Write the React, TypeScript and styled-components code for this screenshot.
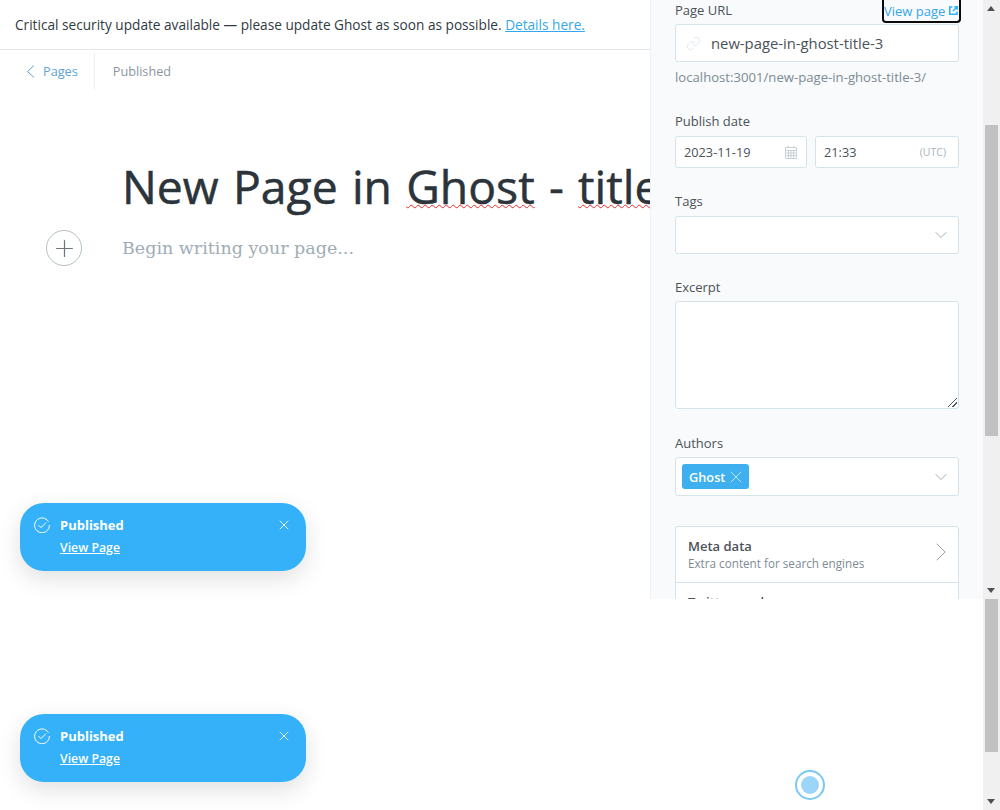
import styled, { createGlobalStyle } from 'styled-components'
import { ChevronDown, ChevronRight, Link, Plus, X } from 'lucide-react'

const BODY_FONT = '"Open Sans", "Noto Sans", sans-serif'

const CheckCircle = () => (
  <svg width='16' height='16' viewBox='0 0 16 16' fill='none' stroke='#fff' strokeWidth='1'>
    <path d='M14.4 4.6A7.4 7.4 0 1 0 15.4 8' />
    <path d='M4.6 8.2l2.4 2.4 5-5' />
  </svg>
)

const CalendarIcon = () => (
  <svg width='12' height='14' viewBox='0 0 12 14' fill='none' stroke='#c9d2d8' strokeWidth='1'>
    <path d='M.5 2.5h11v11H.5zM3 .5v2M9 .5v2' />
    <path d='M.5 5.5h11M.5 8h11M.5 10.5h11M3.5 5.5v8M6 5.5v8M8.5 5.5v8' />
  </svg>
)

const ExternalIcon = () => (
  <svg width='9' height='9' viewBox='0 0 9 9' fill='none' stroke='#35b1f9' strokeWidth='1.6'>
    <path d='M3.5 1H.8v7.2H8V5.5M4 5l4-4M5.2.8h3v3' />
  </svg>
)

const BackChevron = () => (
  <svg width='9' height='13' viewBox='0 0 9 13' fill='none' stroke='#5ba4d6' strokeWidth='1'>
    <path d='M8 .5 1.5 6.5 8 12.5' />
  </svg>
)

const Toast = () => (
  <ToastCard>
    <CheckCircle />
    <ToastBody>
      <ToastTitle>Published</ToastTitle>
      <ToastLink href='#'>View Page</ToastLink>
    </ToastBody>
    <ToastClose>
      <X size={16} strokeWidth={1.3} />
    </ToastClose>
  </ToastCard>
)

const App = () => {
  return (
    <Page>
      <GlobalStyle />
      <Frame>
        <EditorPane>
          <Alert>
            Critical security update available — please update Ghost as soon as possible.{' '}
            <AlertLink href='#'>Details here.</AlertLink>
          </Alert>
          <EditorBar>
            <BackLink>
              <BackChevron />
              Pages
            </BackLink>
            <Status>Published</Status>
          </EditorBar>
          <Editor>
            <Title>
              New Page in <Misspelt>Ghost</Misspelt> - <Misspelt>title</Misspelt>
            </Title>
            <BodyRow>
              <PlusButton>
                <Plus size={27} strokeWidth={1.1} />
              </PlusButton>
              <Placeholder>Begin writing your page...</Placeholder>
            </BodyRow>
          </Editor>
        </EditorPane>
        <Sidebar>
          <LabelRow>
            <UrlLabel>Page URL</UrlLabel>
            <ViewLink href='#'>
              View page <ExternalIcon />
            </ViewLink>
          </LabelRow>
          <UrlField>
            <Link size={15} strokeWidth={1.2} color='#d5e2ea' />
            new-page-in-ghost-title-3
          </UrlField>
          <Hint>localhost:3001/new-page-in-ghost-title-3/</Hint>

          <DateLabel>Publish date</DateLabel>
          <DateRow>
            <SmallField>
              2023-11-19
              <CalendarIcon />
            </SmallField>
            <SmallField>
              21:33
              <Utc>(UTC)</Utc>
            </SmallField>
          </DateRow>

          <TagsLabel>Tags</TagsLabel>
          <SelectField $height={38}>
            <span />
            <ChevronDown size={20} strokeWidth={1} color='#8e9ba3' />
          </SelectField>

          <ExcerptLabel>Excerpt</ExcerptLabel>
          <Excerpt />

          <AuthorsLabel>Authors</AuthorsLabel>
          <SelectField $height={39}>
            <AuthorTag>
              Ghost
              <X size={20} strokeWidth={0.8} />
            </AuthorTag>
            <ChevronDown size={20} strokeWidth={1} color='#8e9ba3' />
          </SelectField>

          <SettingsList>
            <SettingsItem>
              <div>
                <SettingsTitle>Meta data</SettingsTitle>
                <SettingsText>Extra content for search engines</SettingsText>
              </div>
              <SettingsChevron size={32} strokeWidth={0.7} color='#8e9ba3' />
            </SettingsItem>
            <SettingsItem>
              <SettingsTitle>Twitter card</SettingsTitle>
            </SettingsItem>
          </SettingsList>
        </Sidebar>
        <Scrollbar>
          <ArrowUp />
          <Thumb $top={125} $height={311} />
          <ArrowDown />
        </Scrollbar>
        <ToastSlot>
          <Toast />
        </ToastSlot>
      </Frame>
      <Below>
        <Spinner>
          <SpinnerDot />
        </Spinner>
      </Below>
      <OuterScrollbar>
        <Thumb $top={0} $height={153} />
        <ArrowDown />
      </OuterScrollbar>
      <ToastSlot>
        <Toast />
      </ToastSlot>
    </Page>
  )
}

export default App

const GlobalStyle = createGlobalStyle`
  html, body {
    margin: 0;
    padding: 0;
    background: #fff;
    overflow: hidden;
  }
  * {
    box-sizing: border-box;
  }
`

const Page = styled.div`
  position: relative;
  width: 1000px;
  height: 810px;
  overflow: hidden;
  font-family: ${BODY_FONT};
  color: #394047;
  background: #fff;
`

const Frame = styled.div`
  position: relative;
  display: flex;
  width: 1000px;
  height: 599px;
  overflow: hidden;
`

const EditorPane = styled.div`
  width: 650px;
  flex: none;
  overflow: hidden;
  background: #fff;
`

const Alert = styled.div`
  height: 50px;
  padding: 15px 15px 0;
  border-bottom: 1px solid #e3e6e8;
  font-size: 13.65px;
  line-height: 19px;
  color: #2f3a41;
  white-space: nowrap;
`

const AlertLink = styled.a`
  color: #35a7ee;
  text-decoration: underline;
`

const EditorBar = styled.div`
  display: flex;
  align-items: center;
  height: 39px;
  padding: 3px 0 0 26px;
  font-size: 12.7px;
`

const BackLink = styled.div`
  display: flex;
  align-items: center;
  gap: 8px;
  height: 100%;
  padding-right: 16px;
  border-right: 1px solid #e8eef2;
  color: #5ba4d6;
`

const Status = styled.div`
  padding-left: 18px;
  color: #8b979e;
`

const Editor = styled.div`
  padding: 69px 0 0 122px;
`

const Title = styled.div`
  font-size: 46.3px;
  line-height: 58px;
  font-weight: 500;
  word-spacing: 2.2px;
  -webkit-text-stroke: 0.5px #2b343b;
  color: #2b343b;
  white-space: nowrap;
`

const Misspelt = styled.span`
  text-decoration: underline wavy #ee2a2a 1px;
  text-underline-offset: 0;
  text-decoration-skip-ink: none;
`

const BodyRow = styled.div`
  display: flex;
  align-items: center;
  margin: 14px 0 0 -76px;
`

const PlusButton = styled.div`
  display: flex;
  align-items: center;
  justify-content: center;
  flex: none;
  width: 36px;
  height: 36px;
  margin-right: 40px;
  border: 1px solid #b3c0c7;
  border-radius: 50%;
  color: #6b767d;
`

const Placeholder = styled.div`
  font-family: 'DejaVu Serif', serif;
  font-size: 17.5px;
  color: #9fadb6;
`

const Sidebar = styled.aside`
  width: 333px;
  flex: none;
  padding: 0 24px 0 24px;
  background: #f8fafb;
  border-left: 1px solid #eef3f8;
  overflow: hidden;
`

const LabelRow = styled.div`
  display: flex;
  justify-content: space-between;
  height: 24px;
`

const Label = styled.div`
  font-size: 13px;
  line-height: 19px;
  font-weight: 500;
  color: #4b5258;
`

const UrlLabel = styled(Label)`
  margin-top: 1px;
`

const DateLabel = styled(Label)`
  margin-top: 26px;
  margin-bottom: 5px;
`

const TagsLabel = styled(Label)`
  margin-top: 24px;
  margin-bottom: 5px;
`

const ExcerptLabel = styled(Label)`
  margin-top: 24px;
  margin-bottom: 4px;
`

const AuthorsLabel = styled(Label)`
  margin-top: 25px;
  margin-bottom: 4px;
`

const ViewLink = styled.a`
  display: flex;
  align-items: center;
  gap: 4px;
  width: 79px;
  height: 23px;
  margin-right: -2px;
  padding-left: 0;
  border: 2px solid #0b0b0b;
  border-top: none;
  border-radius: 0 0 4px 4px;
  font-size: 13px;
  color: #35a7ee;
  text-decoration: none;
  white-space: nowrap;
`

const Field = styled.div`
  display: flex;
  align-items: center;
  background: #fff;
  border: 1px solid #d6e3eb;
  border-radius: 3px;
`

const UrlField = styled(Field)`
  gap: 10px;
  height: 38px;
  padding-left: 10px;
  font-size: 14.8px;
  color: #4b5258;
`

const Hint = styled.div`
  margin-top: 6px;
  font-size: 13.15px;
  line-height: 18px;
  color: #7d8b94;
  white-space: nowrap;
`

const DateRow = styled.div`
  display: flex;
  gap: 8px;
`

const SmallField = styled(Field)`
  flex: 1;
  justify-content: space-between;
  height: 32px;
  padding: 0 9px 0 8px;
  font-size: 12.75px;
  color: #4b5258;

  &:last-child {
    flex: 0 0 144px;
    padding-right: 12px;
  }
`

const Utc = styled.span`
  font-size: 10.5px;
  color: #a9b4ba;
`

const SelectField = styled(Field)<{ $height: number }>`
  justify-content: space-between;
  height: ${(p) => p.$height}px;
  padding: 0 7px 0 6px;
`

const Excerpt = styled(Field)`
  position: relative;
  height: 108px;
  &::after {
    content: '';
    position: absolute;
    right: 1px;
    bottom: 1px;
    width: 9px;
    height: 9px;
    background: linear-gradient(
      135deg,
      transparent 45%,
      #555 45%,
      #555 52%,
      transparent 52%,
      transparent 72%,
      #555 72%,
      #555 79%,
      transparent 79%
    );
  }
`

const AuthorTag = styled.div`
  display: flex;
  align-items: center;
  gap: 1px;
  height: 25px;
  padding: 0 3px 0 7px;
  background: #3eb0ef;
  border-radius: 3px;
  font-size: 12.75px;
  font-weight: 600;
  color: #fff;
`

const SettingsList = styled.div`
  margin-top: 30px;
  background: #fff;
  border: 1px solid #d6e3eb;
  border-radius: 3px;
`

const SettingsItem = styled.div`
  display: flex;
  align-items: flex-start;
  justify-content: space-between;
  height: 56px;
  padding: 10px 1px 0 12px;
  border-bottom: 1px solid #d6e3eb;
`

const SettingsChevron = styled(ChevronRight)`
  margin-top: -1px;
`

const SettingsTitle = styled.div`
  font-size: 13px;
  line-height: 18px;
  font-weight: 600;
  color: #4b5258;
`

const SettingsText = styled.div`
  font-size: 11.7px;
  line-height: 17px;
  color: #7d8b94;
`

const Scrollbar = styled.div`
  position: relative;
  flex: none;
  width: 17px;
  background: #f0f0f0;
`

const Thumb = styled.div<{ $top: number; $height: number }>`
  position: absolute;
  top: ${(p) => p.$top}px;
  left: 2px;
  width: 13px;
  height: ${(p) => p.$height}px;
  background: #c1c1c1;
`

const ArrowUp = styled.div`
  position: absolute;
  top: 6px;
  left: 4px;
  border: 4px solid transparent;
  border-top: none;
  border-bottom: 5px solid #505050;
`

const ArrowDown = styled.div`
  position: absolute;
  bottom: 6px;
  left: 4px;
  border: 4px solid transparent;
  border-bottom: none;
  border-top: 5px solid #505050;
`

const Below = styled.div`
  display: flex;
  height: 211px;
  padding: 171px 0 0 795px;
`

const Spinner = styled.div`
  display: flex;
  align-items: center;
  justify-content: center;
  width: 30px;
  height: 30px;
  border: 2px solid #7cc8f5;
  border-radius: 50%;
`

const SpinnerDot = styled.div`
  width: 18px;
  height: 18px;
  background: #9bd5f8;
  border-radius: 50%;
`

const OuterScrollbar = styled.div`
  position: absolute;
  top: 599px;
  right: 0;
  width: 17px;
  height: 211px;
  background: #f0f0f0;
`

const ToastSlot = styled.div`
  position: absolute;
  left: 20px;
  bottom: 28px;
`

const ToastCard = styled.div`
  display: flex;
  align-items: flex-start;
  gap: 10px;
  width: 286px;
  height: 68px;
  padding: 14px 14px 14px 14px;
  background: #35b1f9;
  border-radius: 24px;
  box-shadow: 0 8px 24px rgba(0, 0, 0, 0.12);
  color: #fff;
`

const ToastBody = styled.div`
  flex: 1;
`

const ToastTitle = styled.div`
  font-size: 13px;
  line-height: 16px;
  font-weight: 700;
`

const ToastLink = styled.a`
  display: block;
  margin-top: 7px;
  font-size: 12.3px;
  line-height: 16px;
  font-weight: 600;
  color: #fff;
  text-decoration: underline;
`

const ToastClose = styled.div`
  display: flex;
`
